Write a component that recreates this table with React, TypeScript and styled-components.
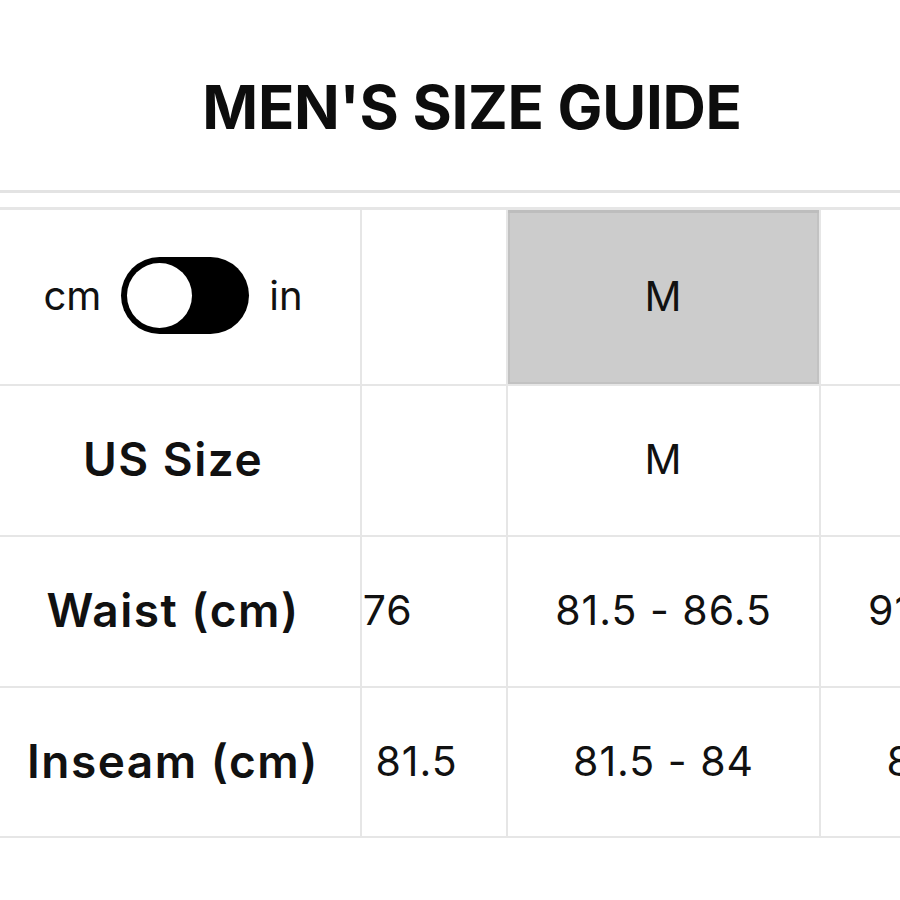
import React, { useLayoutEffect, useRef } from "react";
import styled, { createGlobalStyle } from "styled-components";

const GlobalStyle = createGlobalStyle`
  html, body { margin: 0; padding: 0; background: #ffffff; }
  body { font-family: Inter, "Noto Sans", sans-serif; color: #111111; }
  * { box-sizing: border-box; }
`;

const Page = styled.div`
  width: 900px;
  height: 900px;
  overflow: hidden;
  background: #fff;
`;

const Header = styled.header`
  height: 193px;
  padding: 24px 0 0 44px;
  display: flex;
  align-items: center;
  justify-content: center;
  border-bottom: 3px solid #e3e3e3;
`;

const Title = styled.h1`
  margin: 0;
  font-size: 60px;
  font-weight: 700;
  letter-spacing: -0.3px;
  line-height: 1;
  color: #0d0d0d;
`;

const ScrollArea = styled.div`
  margin-top: 14px;
  width: 900px;
  overflow: hidden;
`;

const Grid = styled.div`
  display: grid;
  grid-template-columns: 362px repeat(4, 313px);
  grid-template-rows: 176px 151px 151px 150px;
  width: max-content;
  border-top: 3px solid #e6e6e6;
`;

const Cell = styled.div<{ $highlight?: boolean }>`
  display: flex;
  align-items: center;
  justify-content: center;
  padding-bottom: 3px;
  border-right: 2px solid #e6e6e6;
  border-bottom: 2px solid #e6e6e6;
  background: ${(p) => (p.$highlight ? "#cccccc" : "#ffffff")};
  box-shadow: ${(p) =>
    p.$highlight ? "inset 0 3px 0 #bdbdbd, inset 0 0 0 2px #c2c2c2" : "none"};
  font-size: 41px;
  font-weight: 400;
  letter-spacing: 1px;
  color: #111;
  white-space: pre;
`;

const LabelCell = styled(Cell)`
  position: sticky;
  left: 0;
  z-index: 2;
  background: #ffffff;
  padding-right: 14px;
  font-size: 46px;
  font-weight: 600;
  letter-spacing: 1.5px;
`;

const UnitToggle = styled.div`
  display: flex;
  align-items: center;
  gap: 20px;
  font-size: 40px;
  font-weight: 400;
  letter-spacing: 0;
`;

const Switch = styled.button`
  width: 128px;
  height: 77px;
  border-radius: 39px;
  border: none;
  padding: 0 0 0 6px;
  background: #000;
  display: flex;
  align-items: center;
  cursor: pointer;
`;

const Knob = styled.span`
  width: 65px;
  height: 65px;
  border-radius: 50%;
  background: #fff;
`;

const sizes = ["S", "M", "L", "XL"];
const waist = ["71 - 76\u00a0", "81.5 - 86.5", "91.5 - 96.5", "101.5 - 106.5"];
const inseam = ["78.5 - 81.5", "81.5 - 84", "81.5 - 86", "84 - 86"];

export default function App() {
  const ref = useRef<HTMLDivElement>(null);
  useLayoutEffect(() => {
    if (ref.current) ref.current.scrollLeft = 167;
  }, []);

  return (
    <Page>
      <GlobalStyle />
      <Header>
        <Title>MEN'S SIZE GUIDE</Title>
      </Header>
      <ScrollArea ref={ref}>
        <Grid>
          <LabelCell>
            <UnitToggle>
              <span>cm</span>
              <Switch role="switch" aria-checked="false" aria-label="units">
                <Knob />
              </Switch>
              <span>in</span>
            </UnitToggle>
          </LabelCell>
          {sizes.map((s) => (
            <Cell key={"h" + s} $highlight={s === "M"}>
              {s}
            </Cell>
          ))}
          <LabelCell>US Size</LabelCell>
          {sizes.map((s) => (
            <Cell key={"u" + s}>{s}</Cell>
          ))}
          <LabelCell>Waist (cm)</LabelCell>
          {waist.map((v) => (
            <Cell key={"w" + v}>{v}</Cell>
          ))}
          <LabelCell>Inseam (cm)</LabelCell>
          {inseam.map((v) => (
            <Cell key={"i" + v}>{v}</Cell>
          ))}
        </Grid>
      </ScrollArea>
    </Page>
  );
}
